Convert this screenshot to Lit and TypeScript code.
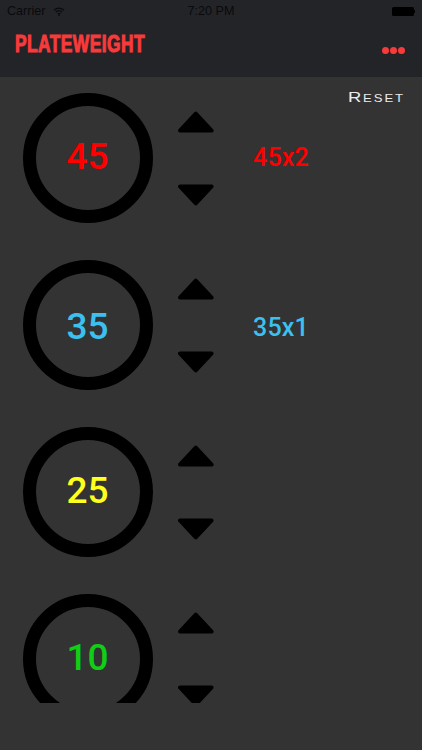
import { LitElement, html, css, svg } from "lit";
import { customElement } from "lit/decorators.js";

const plates = [
  { v: "45", c: "#ff0000", label: "45x2", dy: -1 },
  { v: "35", c: "#3cc0f0", label: "35x1", dy: 2 },
  { v: "25", c: "#ffff1e", label: "", dy: -1 },
  { v: "10", c: "#0fce14", label: "", dy: -1 },
];

const up = svg`<path d="M17.8 2.6 L33.6 19.6 H2 Z" fill="#000" stroke="#000" stroke-width="4" stroke-linejoin="round"/>`;
const down = svg`<path d="M2 2.4 H33.6 L17.8 19.4 Z" fill="#000" stroke="#000" stroke-width="4" stroke-linejoin="round"/>`;

@customElement("app-root")
export class AppRoot extends LitElement {
  static styles = css`
    :host { display: flex; flex-direction: column; width: 422px; height: 750px; background: #333333; overflow: hidden; position: relative; }
    .top { height: 77px; background: #232428; flex: none; display: flex; flex-direction: column; }
    .status { height: 22px; display: grid; grid-template-columns: 1fr auto 1fr; align-items: center; padding: 0 7px; font: 12.6px "Liberation Sans", sans-serif; color: #0a0a0c; }
    .carrier { display: flex; align-items: center; gap: 8px; }
    .battery { justify-self: end; display: flex; align-items: center; }
    .bat { width: 22px; height: 9px; background: #000; border-radius: 1.5px; }
    .nub { width: 1.5px; height: 3px; background: #000; }
    .nav { flex: 1; display: flex; justify-content: space-between; align-items: flex-start; padding: 8px 17px 0 15px; }
    .title { font: bold 24.5px/27px "Liberation Sans", sans-serif; color: #f93a3a; -webkit-text-stroke: 1.1px #f93a3a; letter-spacing: 0.6px; transform: scaleX(0.71); transform-origin: left center; white-space: nowrap; }
    .dots { display: flex; gap: 1px; margin-top: 17px; }
    .dots i { width: 7px; height: 7px; border-radius: 50%; background: #f93a3a; }
    .list { height: 626px; flex: none; overflow: hidden; padding-top: 16px; box-sizing: border-box; display: flex; flex-direction: column; gap: 37px; position: relative; }
    .reset { position: absolute; top: 11px; right: 17px; font: 15.5px/18px "Liberation Sans", sans-serif; font-variant: small-caps; letter-spacing: 1.6px; color: #ececec; transform: scaleX(1.19); transform-origin: right center; }
    .row { flex: none; height: 130px; display: flex; align-items: center; padding-left: 23px; }
    .ring { width: 130px; height: 130px; box-sizing: border-box; border: 13px solid #000; border-radius: 50%; display: flex; align-items: center; justify-content: center; flex: none; }
    .num { font: 500 37px/40px Roboto, sans-serif; margin-left: -1px; }
    .arrows { width: 36px; height: 95px; margin-left: 25px; flex: none; display: flex; flex-direction: column; justify-content: space-between; }
    .arrows svg { display: block; }
    .label { margin-left: 39px; font: 500 25px/28px Roboto, sans-serif; letter-spacing: 0.2px; padding-top: 2px; }
  `;

  render() {
    return html`
      <div class="top">
        <div class="status">
          <div class="carrier">Carrier
            <svg width="12" height="9" viewBox="0 0 13 10"><path d="M1 3.5 Q6.5 -1 12 3.5 M3 5.6 Q6.5 2.6 10 5.6 M5 7.6 Q6.5 6.4 8 7.6" fill="none" stroke="#0a0a0c" stroke-width="1.4"/><circle cx="6.5" cy="9" r="1" fill="#0a0a0c"/></svg>
          </div>
          <div>7:20 PM</div>
          <div class="battery"><span class="bat"></span><span class="nub"></span></div>
        </div>
        <div class="nav">
          <div class="title">PLATEWEIGHT</div>
          <div class="dots"><i></i><i></i><i></i></div>
        </div>
      </div>
      <div class="list">
        <div class="reset">Reset</div>
        ${plates.map((p) => html`
          <div class="row">
            <div class="ring"><span class="num" style="color:${p.c};transform:translateY(${p.dy}px)">${p.v}</span></div>
            <div class="arrows">
              <svg width="36" height="22" viewBox="0 0 36 22">${up}</svg>
              <svg width="36" height="22" viewBox="0 0 36 22">${down}</svg>
            </div>
            ${p.label ? html`<div class="label" style="color:${p.c};transform:translateY(${p.dy}px)">${p.label}</div>` : ""}
          </div>`)}
      </div>
    `;
  }
}
